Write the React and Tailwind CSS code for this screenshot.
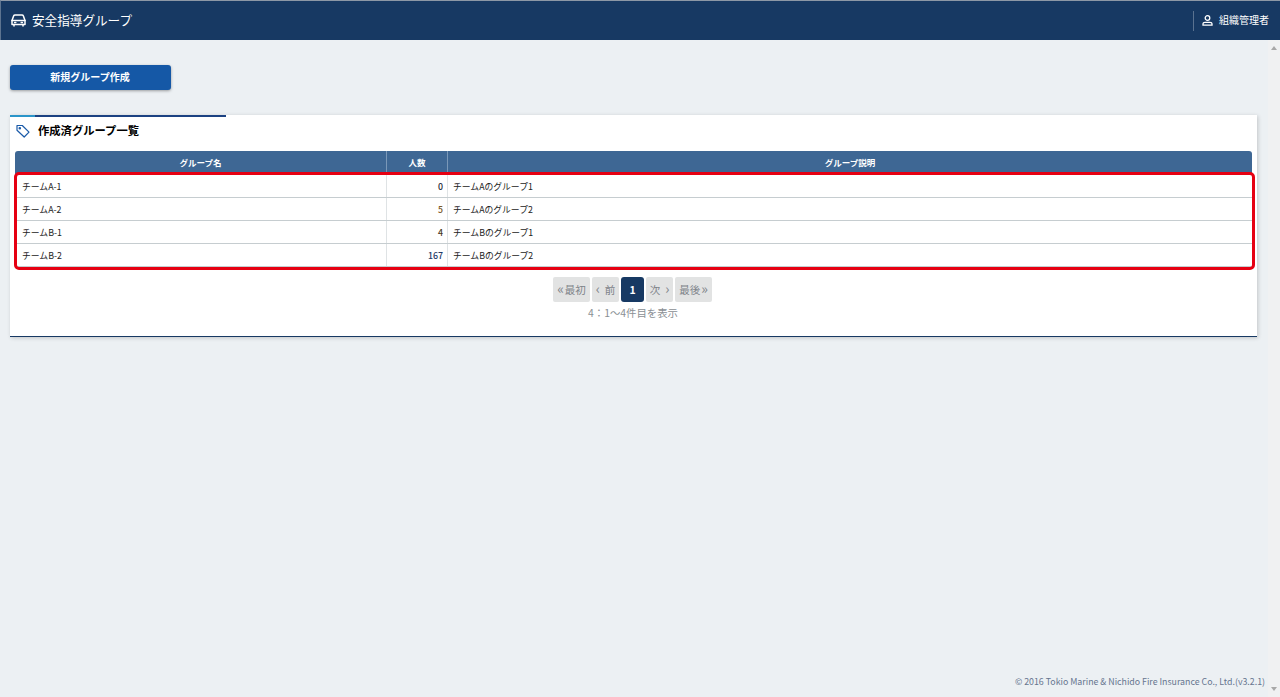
const font = { fontFamily: '"Noto Sans CJK JP", "Noto Sans", sans-serif' };

const rows = [
  { name: 'チームA-1', count: '0', desc: 'チームAのグループ1', color: 'text-[#1f2937]' },
  { name: 'チームA-2', count: '5', desc: 'チームAのグループ2', color: 'text-[#7a5a2a]' },
  { name: 'チームB-1', count: '4', desc: 'チームBのグループ1', color: 'text-[#4a3a1a]' },
  { name: 'チームB-2', count: '167', desc: 'チームBのグループ2', color: 'text-[#1e3a66]' },
];

function Car() {
  return (
    <svg width="15" height="13" viewBox="0 0 15 13" fill="none" stroke="white" strokeWidth="1.5" strokeLinejoin="round" strokeLinecap="round">
      <path d="M1 6.5 L2.6 2 Q3 1 4 1 H11 Q12 1 12.4 2 L14 6.5 V10.5 H1 Z" />
      <path d="M1 6.5 H14" />
      <path d="M3 10.5 V12 M12 10.5 V12" />
      <path d="M3.6 8.5 H4.8 M10.2 8.5 H11.4" />
    </svg>
  );
}

function User() {
  return (
    <svg width="11" height="11" viewBox="0 0 11 11" fill="none" stroke="white" strokeWidth="1.3" className="shrink-0">
      <circle cx="5.5" cy="3" r="2.3" />
      <path d="M1 10.2 V8.8 Q1 7.4 3 7.4 H8 Q10 7.4 10 8.8 V10.2 Z" />
    </svg>
  );
}

function Tag() {
  return (
    <svg width="14" height="14" viewBox="0 0 14 14" fill="none" stroke="#1a5aa8" strokeWidth="1.2" strokeLinejoin="round">
      <path d="M1 1.5 H6.3 L13 8.2 L8.2 13 L1 6.2 Z" />
      <circle cx="3.8" cy="4.2" r="0.7" />
    </svg>
  );
}

function PageBtn({ children, className = '' }) {
  return (
    <div className={`h-[25px] flex items-center justify-center rounded-[2px] bg-[#e2e3e3] text-[#7d8288] text-[10.5px] ${className}`}>
      {children}
    </div>
  );
}

function Arrow({ children }) {
  return <span className="text-[14px] leading-none pb-[3px]">{children}</span>;
}

export default function App() {
  return (
    <div style={font} className="relative h-[697px] w-[1280px] overflow-hidden bg-[#ecf0f3] flex flex-col">
      <header className="h-10 shrink-0 bg-[#173963] border-t border-t-[#8d98a6] border-l border-l-[#5d7490] flex items-center justify-between pl-[10px] pr-[11px]">
        <div className="flex items-center gap-[6px] text-white text-[12.6px] leading-none">
          <Car />
          <span>安全指導グループ</span>
        </div>
        <div className="flex items-center h-5 border-l border-l-[#5a7290] pl-2 gap-[6px] text-white text-[10px] leading-none pb-px">
          <User />
          <span>組織管理者</span>
        </div>
      </header>

      <div className="flex flex-1 min-h-0">
        <main className="flex-1 min-w-0 flex flex-col pl-[10px] pr-[10px]">
          <button className="mt-[25px] w-[161px] h-[25px] rounded-[3px] bg-[#1558a6] text-white text-[10px] font-bold shadow-[0_1px_3px_rgba(0,0,0,0.35)] pb-[2px] pr-[1px]">
            新規グループ作成
          </button>

          <section className="mt-[25px] w-[1247px] h-[222px] bg-white border-b border-b-[#173963] shadow-[1px_1px_4px_rgba(0,0,0,0.18)] flex flex-col">
            <div className="flex h-[2px] shrink-0">
              <div className="w-[25px] bg-[#2b95c9]" />
              <div className="w-[191px] bg-[#1c4282]" />
            </div>
            <div className="h-[34px] shrink-0 flex items-center gap-2 pl-[6px] pb-[6px] text-[11.3px] font-bold text-black leading-none">
              <Tag />
              <span>作成済グループ一覧</span>
            </div>

            <div className="mx-[5px] w-[1237px] relative">
              <div className="grid grid-cols-[372px_61px_1fr] h-[23px] pb-px bg-[#3e6794] rounded-t-[3px] text-white text-[8.5px] font-bold">
                <div className="flex items-center justify-center border-r border-r-[#7a98b8]">グループ名</div>
                <div className="flex items-center justify-center border-r border-r-[#7a98b8]">人数</div>
                <div className="flex items-center justify-center">グループ説明</div>
              </div>
              <div className="pt-px">
                {rows.map((r) => (
                  <div key={r.name} className="grid grid-cols-[372px_61px_1fr] h-[23px] bg-white border-b border-b-[#c6cdd0] text-[8.8px] text-[#222]">
                    <div className="flex items-center pl-[7px] pt-px border-r border-r-[#dfe3e5]">{r.name}</div>
                    <div className={`flex items-center justify-end pr-1 pt-px border-r border-r-[#dfe3e5] font-medium ${r.color}`}>{r.count}</div>
                    <div className="flex items-center pl-[5px] pt-px">{r.desc}</div>
                  </div>
                ))}
              </div>
              <div className="absolute left-[-1px] top-[21px] w-[1241px] h-[98px] border-[3px] border-[#e60012] rounded-[5px]" />
            </div>

            <div className="mt-[10px] mr-[2px] flex justify-center gap-[2px]">
              <PageBtn className="w-[37px] gap-[1px]"><Arrow>«</Arrow><span>最初</span></PageBtn>
              <PageBtn className="w-[27px] gap-[5px]"><Arrow>‹</Arrow><span>前</span></PageBtn>
              <div className="w-[23px] h-[25px] flex items-center justify-center rounded-[3px] bg-[#173963] text-white text-[10.5px] font-bold">1</div>
              <PageBtn className="w-[27px] gap-[5px]"><span>次</span><Arrow>›</Arrow></PageBtn>
              <PageBtn className="w-[37px] gap-[1px]"><span>最後</span><Arrow>»</Arrow></PageBtn>
            </div>
            <div className="mt-[3px] text-center text-[10.4px] leading-[16px] text-[#8a8f94] mr-px">
              4：1〜4件目を表示
            </div>
          </section>

          <footer className="mt-auto mb-[9px] self-end -mr-[7px] text-[8.8px] leading-[12px] text-[#66758f]">
            © 2016 Tokio Marine &amp; Nichido Fire Insurance Co., Ltd.(v3.2.1)
          </footer>
        </main>

        <aside className="w-3 shrink-0 bg-[#f0f1f2] flex flex-col items-center justify-between py-[6px]">
          <div className="w-0 h-0 border-x-[3px] border-x-transparent border-b-[4px] border-b-[#a8a8a8]" />
          <div className="w-0 h-0 border-x-[3px] border-x-transparent border-t-[4px] border-t-[#a8a8a8]" />
        </aside>
      </div>
    </div>
  );
}
